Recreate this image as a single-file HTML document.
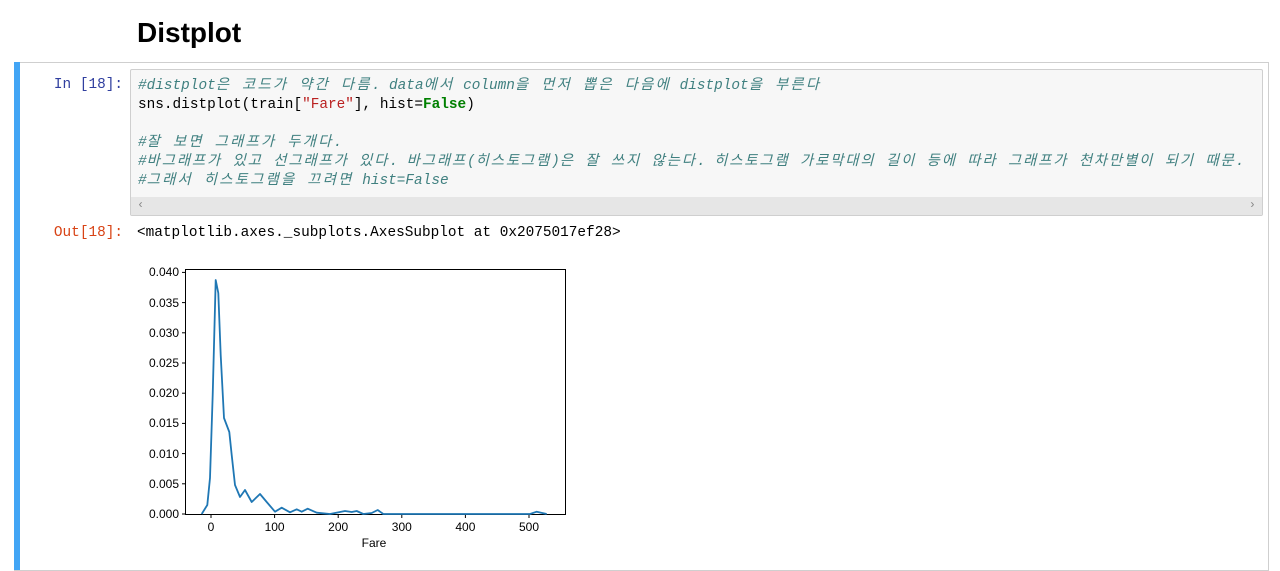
<!DOCTYPE html>
<html><head><meta charset="utf-8"><style>
body{margin:0;background:#fff;width:1280px;height:571px;overflow:hidden;position:relative;font-family:"Liberation Sans","Noto Sans CJK KR",sans-serif}
h1{position:absolute;left:137px;top:17px;margin:0;font-size:28px;font-weight:bold;color:#000}
.cell{position:absolute;left:14px;top:62px;width:1254px;height:507px;border:1px solid #cfcfcf;border-left:none;box-sizing:content-box}
.bar{position:absolute;left:14px;top:62px;width:6px;height:508px;background:#42a5f5}
.mono{font-family:"Liberation Mono","Noto Sans CJK KR",monospace;font-size:14.4px}
.pin{position:absolute;right:1157px;top:77px;color:#303f9f;white-space:pre}
.pout{position:absolute;right:1157px;top:225px;color:#d84315;white-space:pre}
.code{position:absolute;left:130px;top:69px;width:1131px;height:145px;border:1px solid #cfcfcf;border-radius:2px;background:#f7f7f7;overflow:hidden}
.code pre{font:inherit;margin:0;position:absolute;left:7px;top:7px;line-height:19px;white-space:pre;color:#000}
.code pre div{height:19px;line-height:19px}
.c{color:#408080;font-style:italic}
.h{letter-spacing:2.2px}
.l3 .h{letter-spacing:1.85px}
.s{color:#ba2121}
.k{color:#008000;font-weight:bold}
.sb{position:absolute;left:0;right:0;bottom:0;height:18px;background:#e6e6e6;color:#888;font-size:12px}
.out{position:absolute;left:137px;top:225px;white-space:pre;color:#000}
svg{position:absolute;left:0;top:0}
</style></head><body>
<h1>Distplot</h1>
<div class="cell"></div>
<div class="bar"></div>
<div class="mono pin">In [18]:</div>
<div class="code mono"><pre><div><span class="c">#distplot<span class="h">은 코드가 약간 다름</span>. data<span class="h">에서</span> column<span class="h">을 먼저 뽑은 다음에</span> distplot<span class="h">을 부른다</span></span></div><div>sns.distplot(train[<span class="s">"Fare"</span>], hist=<span class="k">False</span>)</div><div></div><div><span class="c">#<span class="h">잘 보면 그래프가 두개다</span>.</span></div><div class="l3"><span class="c">#<span class="h">바그래프가 있고 선그래프가 있다</span>. <span class="h">바그래프</span>(<span class="h">히스토그램</span>)<span class="h">은 잘 쓰지 않는다</span>. <span class="h">히스토그램 가로막대의 길이 등에 따라 그래프가 천차만별이 되기 때문</span>.</span></div><div><span class="c">#<span class="h">그래서 히스토그램을 끄려면</span> hist=False</span></div></pre>
<div class="sb"><span style="position:absolute;left:6px;top:1px">&lsaquo;</span><span style="position:absolute;right:6px;top:1px">&rsaquo;</span></div></div>
<div class="mono pout">Out[18]:</div>
<div class="mono out">&lt;matplotlib.axes._subplots.AxesSubplot at 0x2075017ef28&gt;</div>
<svg width="1280" height="571" font-family="Liberation Sans, sans-serif" font-size="12" fill="#000">
<rect x="185.5" y="269.5" width="380" height="245" fill="none" stroke="#000" stroke-width="1"/>
<g stroke="#000">
<line x1="182" x2="185" y1="514" y2="514"/><line x1="182" x2="185" y1="483.8" y2="483.8"/><line x1="182" x2="185" y1="453.6" y2="453.6"/><line x1="182" x2="185" y1="423.4" y2="423.4"/><line x1="182" x2="185" y1="393.2" y2="393.2"/><line x1="182" x2="185" y1="363" y2="363"/><line x1="182" x2="185" y1="332.8" y2="332.8"/><line x1="182" x2="185" y1="302.6" y2="302.6"/><line x1="182" x2="185" y1="272.4" y2="272.4"/>
<line y1="515" y2="518" x1="211" x2="211"/><line y1="515" y2="518" x1="274.6" x2="274.6"/><line y1="515" y2="518" x1="338.2" x2="338.2"/><line y1="515" y2="518" x1="401.8" x2="401.8"/><line y1="515" y2="518" x1="465.4" x2="465.4"/><line y1="515" y2="518" x1="529" x2="529"/>
</g>
<g text-anchor="end">
<text x="179" y="518">0.000</text><text x="179" y="488">0.005</text><text x="179" y="458">0.010</text><text x="179" y="427">0.015</text><text x="179" y="397">0.020</text><text x="179" y="367">0.025</text><text x="179" y="337">0.030</text><text x="179" y="307">0.035</text><text x="179" y="276">0.040</text>
</g>
<g text-anchor="middle">
<text x="211" y="531">0</text><text x="274.6" y="531">100</text><text x="338.2" y="531">200</text><text x="401.8" y="531">300</text><text x="465.4" y="531">400</text><text x="529" y="531">500</text>
<text x="374" y="547">Fare</text>
</g>
<polyline fill="none" stroke="#1f77b4" stroke-width="1.8" stroke-linejoin="round" points="201.7,514 207.3,505 210,478 212.7,395 215.7,280 218.3,293 220.7,355 224,418 229.3,432 231.7,455 235,485 240,497 245,490 251.7,502 260,494 266.7,502 275,511.7 281.7,507.7 290,512.3 296.7,509.3 301.7,511.7 307.7,508.7 316.7,512.7 330,514 345,511 351.7,512 356.7,511 363.3,514 371.7,513 377.7,510 383.3,514 530,514 536.7,511.7 546.7,514"/>
</svg>
</body></html>
